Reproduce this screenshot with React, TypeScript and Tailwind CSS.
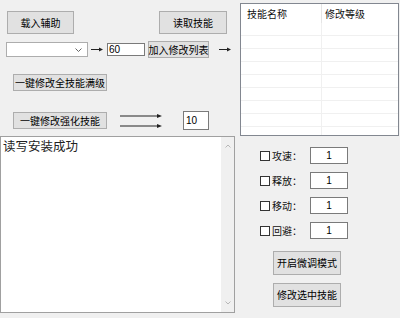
import React from "react";

const Btn = ({ children, className = "" }: { children: React.ReactNode; className?: string }) => (
  <div
    className={
      "flex items-center justify-center bg-[#e1e1e1] border border-[#adadad] text-[10px] leading-none text-black whitespace-nowrap " +
      className
    }
  >
    {children}
  </div>
);

const Arrow = ({ className = "" }: { className?: string }) => (
  <svg className={className} width="12" height="7" viewBox="0 0 12 7">
    <line x1="0" y1="3.5" x2="9" y2="3.5" stroke="#222" strokeWidth="1" />
    <path d="M8 1.5 L12 3.5 L8 5.5 Z" fill="#222" />
  </svg>
);

const Chk = ({ label }: { label: string }) => (
  <div className="flex items-center h-[17px]">
    <div className="w-[50px] flex items-center">
      <div className="w-[10px] h-[10px] border border-[#333] bg-white" />
      <span className="ml-[2px] text-[10px] leading-none text-[#111]">{label}</span>
    </div>
    <div className="w-[38px] h-[17px] bg-white border border-[#7a7a7a] flex items-center justify-center text-[10px] leading-none font-['Liberation_Sans',sans-serif]">
      1
    </div>
  </div>
);

export default function App() {
  const rows = [0, 1, 2, 3, 4, 5, 6, 7];
  return (
    <div className="w-[400px] h-[318px] bg-[#f0f0f0] flex overflow-hidden font-['Noto_Sans_CJK_SC','Noto_Sans_CJK_SC',sans-serif]">
      {/* left column */}
      <div className="w-[236px] flex flex-col">
        <div className="mt-[11px] h-[23px] flex">
          <Btn className="ml-[7px] w-[67px] h-[23px]">载入辅助</Btn>
          <Btn className="ml-[85px] w-[68px] h-[23px]">读取技能</Btn>
        </div>
        <div className="mt-[7px] h-[17px] flex items-center">
          <div className="ml-[6px] w-[82px] h-[15px] bg-white border border-[#adadad] flex items-center justify-end pr-[5px]">
            <svg width="7" height="4" viewBox="0 0 7 4">
              <path d="M0.5 0.5 L3.5 3.5 L6.5 0.5" fill="none" stroke="#555" strokeWidth="0.9" />
            </svg>
          </div>
          <Arrow className="ml-[3px]" />
          <div className="ml-[4px] w-[38px] h-[13px] bg-white border border-[#7a7a7a] flex items-center pl-[1px] text-[10px] leading-none font-['Liberation_Sans',sans-serif]">
            60
          </div>
          <Btn className="ml-[3px] w-[61px] h-[17px]">加入修改列表</Btn>
          <Arrow className="ml-[10px]" />
        </div>
        <div className="mt-[16px] h-[17px] flex">
          <Btn className="ml-[13px] w-[94px] h-[17px]">一键修改全技能满级</Btn>
        </div>
        <div className="mt-[20px] h-[19px] flex items-center">
          <Btn className="ml-[13px] w-[94px] h-[17px]">一键修改强化技能</Btn>
          <svg className="ml-[13px]" width="42" height="19" viewBox="0 0 42 19">
            <line x1="0" y1="5" x2="38" y2="5" stroke="#222" strokeWidth="1" />
            <path d="M37 3 L42 5 L37 7 Z" fill="#222" />
            <line x1="0" y1="15" x2="38" y2="15" stroke="#222" strokeWidth="1" />
            <path d="M37 13 L42 15 L37 17 Z" fill="#222" />
          </svg>
          <div className="ml-[21px] w-[26px] h-[19px] bg-white border border-[#7a7a7a] flex items-center pl-[2px] text-[10px] leading-none font-['Liberation_Sans',sans-serif]">
            10
          </div>
        </div>
        <div className="mt-[6px] h-[177px] w-[235px] bg-white border border-[#a0a0a0] flex">
          <div className="flex-1 pl-[2px] pt-[2px] text-[12.5px] leading-[14px] text-[#222]">读写安装成功</div>
          <div className="w-[13px] h-full bg-[#f0f0f0] flex flex-col items-center justify-between py-[7px]">
            <svg width="6" height="4" viewBox="0 0 6 4">
              <path d="M0.5 3.5 L3 1 L5.5 3.5" fill="none" stroke="#b0b0b0" strokeWidth="0.9" />
            </svg>
            <svg width="6" height="4" viewBox="0 0 6 4">
              <path d="M0.5 0.5 L3 3 L5.5 0.5" fill="none" stroke="#b0b0b0" strokeWidth="0.9" />
            </svg>
          </div>
        </div>
      </div>

      {/* right column */}
      <div className="ml-[4px] w-[159px] flex flex-col">
        <div className="mt-[3px] h-[133px] bg-white border border-[#828790] flex flex-col overflow-hidden">
          <div className="h-[19px] flex shrink-0 text-[10px] leading-none text-[#111]">
            <div className="w-[81px] border-r border-[#e5e5e5] flex items-center pl-[6px]">技能名称</div>
            <div className="flex-1 flex items-center pl-[3px]">修改等级</div>
          </div>
          {rows.map((r) => (
            <div key={r} className="h-[13px] shrink-0 flex border-b border-[#f0f0f0]">
              <div className="w-[81px] border-r border-[#f0f0f0]" />
              <div className="flex-1" />
            </div>
          ))}
          <div className="flex-1 flex">
            <div className="w-[81px] border-r border-[#f0f0f0]" />
          </div>
        </div>
        <div className="mt-[11px] ml-[20px] flex flex-col gap-[8px]">
          <Chk label="攻速：" />
          <Chk label="释放：" />
          <Chk label="移动：" />
          <Chk label="回避：" />
        </div>
        <Btn className="mt-[12px] ml-[33px] w-[68px] h-[24px]">开启微调模式</Btn>
        <Btn className="mt-[8px] ml-[33px] w-[68px] h-[24px]">修改选中技能</Btn>
      </div>
    </div>
  );
}
